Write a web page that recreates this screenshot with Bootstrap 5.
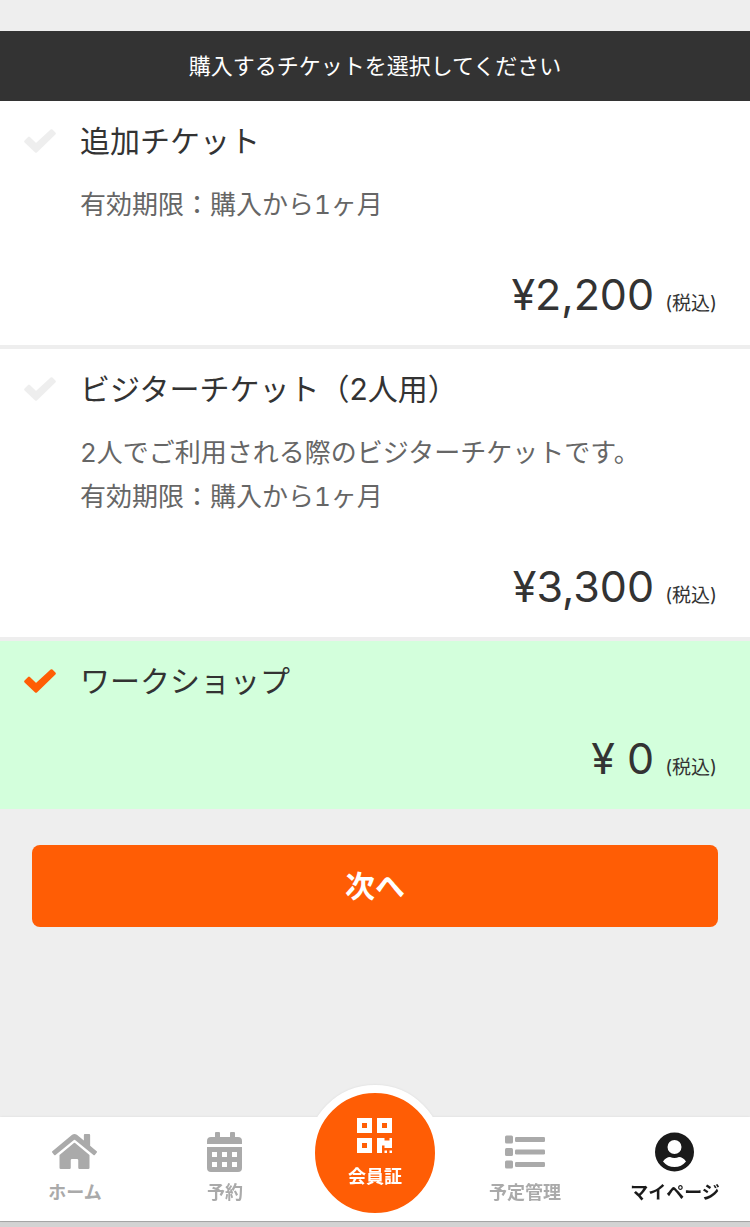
<!DOCTYPE html>
<html lang="ja">
<head>
<meta charset="utf-8">
<meta name="viewport" content="width=device-width, initial-scale=1">
<title>チケット購入</title>
<link href="https://cdn.jsdelivr.net/npm/bootstrap@5.3.0/dist/css/bootstrap.min.css" rel="stylesheet">
<style>
  body { font-family: Inter, "Noto Sans CJK JP", sans-serif; background: #eee; color: #333; }
  .page-title { margin-top: 31px; background: #333; font-size: 22px; line-height: 70px; font-weight: 400; }
  .ticket { padding: 16px 33px 18px 24px; gap: 24px; background: #fff; cursor: pointer; }
  .ticket:has(input:checked) { background: #d3ffdc; }
  .ticket + .ticket { margin-top: 4px; }
  .ticket-check {
    appearance: none; width: 32px; height: 24px; margin: 12px 0; background: #eee;
    -webkit-mask: url("data:image/svg+xml,%3Csvg xmlns='http://www.w3.org/2000/svg' viewBox='0 0 32 24'%3E%3Cpath d='M1.500 12.500 5 9 12 15.800 27.500 1.500 30.500 4.500 12 22.500z' stroke='%23000' stroke-width='2.600' stroke-linejoin='round'/%3E%3C/svg%3E") center / 100% 100% no-repeat;
  }
  .ticket-check:checked { background: #ff5d05; }
  .ticket-name { font-size: 30px; line-height: 48px; }
  .ticket-note { padding: 18px 0 14px; font-size: 26px; line-height: 44px; color: #666; font-variant-numeric: tabular-nums; }
  .ticket-price { padding-top: 20px; gap: 11px; font-size: 43px; line-height: 66px; }
  .ticket-tax { font-size: 19px; line-height: 24px; }
  .form-actions { padding: 36px 32px; }
  .btn-next { --bs-btn-bg: #ff5d05; --bs-btn-hover-bg: #e85200; --bs-btn-active-bg: #d64b00; --bs-btn-color: #fff; --bs-btn-hover-color: #fff; --bs-btn-active-color: #fff;
    padding: 16px; border: 0; border-radius: 8px; font-size: 30px; line-height: 50px; font-weight: 600; }
  .tab-bar { background: #fff; height: 104px; filter: drop-shadow(0 0 1px rgba(0,0,0,.08)); }
  .tab-item { flex: 1 1 0; padding-top: 12px; color: #aaa; font-size: 18px; line-height: 36px; font-weight: 600; text-decoration: none; white-space: nowrap; }
  .tab-item svg { height: 46px; }
  .tab-item.active { color: #1a1a1a; }
  .tab-center { flex: 1 1 0; }
  .tab-card { flex: none; width: 136px; height: 136px; margin-top: -32px; padding-top: 22px; border: 8px solid #fff; border-radius: 50%; background: #ff5d05; color: #fff; line-height: 32px; }
  .screen-edge { height: 6px; background: #d3d3d3; border-top: 1px solid #aaa; }
</style>
<script src="https://cdn.jsdelivr.net/npm/bootstrap@5.3.0/dist/js/bootstrap.bundle.min.js"></script>
</head>
<body class="d-flex flex-column min-vh-100">
<main>
  <h1 class="page-title mb-0 text-center text-white">購入するチケットを選択してください</h1>
  <form>
    <label class="ticket d-flex align-items-start">
      <input class="ticket-check flex-shrink-0" type="radio" name="ticket">
      <span class="flex-grow-1">
        <span class="ticket-name d-block">追加チケット</span>
        <span class="ticket-note d-block">有効期限：購入から1ヶ月</span>
        <span class="ticket-price d-flex justify-content-end align-items-baseline"><span>¥2,200</span><span class="ticket-tax">(税込)</span></span>
      </span>
    </label>
    <label class="ticket d-flex align-items-start">
      <input class="ticket-check flex-shrink-0" type="radio" name="ticket">
      <span class="flex-grow-1">
        <span class="ticket-name d-block">ビジターチケット（2人用）</span>
        <span class="ticket-note d-block">2人でご利用される際のビジターチケットです。<br>有効期限：購入から1ヶ月</span>
        <span class="ticket-price d-flex justify-content-end align-items-baseline"><span>¥3,300</span><span class="ticket-tax">(税込)</span></span>
      </span>
    </label>
    <label class="ticket d-flex align-items-start">
      <input class="ticket-check flex-shrink-0" type="radio" name="ticket" checked>
      <span class="flex-grow-1">
        <span class="ticket-name d-block">ワークショップ</span>
        <span class="ticket-price d-flex justify-content-end align-items-baseline"><span>¥ 0</span><span class="ticket-tax">(税込)</span></span>
      </span>
    </label>
    <div class="form-actions"><button type="button" class="btn btn-next w-100">次へ</button></div>
  </form>
</main>
<footer class="mt-auto">
  <nav class="tab-bar d-flex">
    <a class="tab-item d-flex flex-column align-items-center" href="#home">
      <svg width="46" viewBox="0 0 46 46" fill="currentColor" aria-hidden="true"><path transform="translate(0 2.5) scale(.078125)" d="M280.37 148.26L96 300.11V464a16 16 0 0 0 16 16l112.06-.29a16 16 0 0 0 15.92-16V368a16 16 0 0 1 16-16h64a16 16 0 0 1 16 16v95.64a16 16 0 0 0 16 16.05L464 480a16 16 0 0 0 16-16V300L295.67 148.26a12.19 12.19 0 0 0-15.3 0zM571.6 251.47L488 182.56V44.05a12 12 0 0 0-12-12h-56a12 12 0 0 0-12 12v72.61L318.47 43a48 48 0 0 0-61 0L4.34 251.47a12 12 0 0 0-1.6 16.9l25.5 31A12 12 0 0 0 45.15 301l235.22-193.74a12.19 12.19 0 0 1 15.3 0L530.9 301a12 12 0 0 0 16.9-1.6l25.5-31a12 12 0 0 0-1.7-16.93z"/></svg>
      <span>ホーム</span></a>
    <a class="tab-item d-flex flex-column align-items-center" href="#reserve">
      <svg width="36" viewBox="0 0 36 46" fill="currentColor" aria-hidden="true"><path d="M0 15V12q0-4 4-4H8V4q0-1 1-1h3q1 0 1 1v4h10V4q0-1 1-1h3q1 0 1 1v4h3q4 0 4 4v3z"/><path fill-rule="evenodd" d="M0 18h35v21q0 4-4 4H4q-4 0-4-4zM5 23v5h5v-5zm10 0v5h5v-5zm10 0v5h5v-5zM5 33v5h5v-5zm10 0v5h5v-5zm10 0v5h5v-5z"/></svg>
      <span>予約</span></a>
    <div class="tab-center d-flex justify-content-center">
      <a class="tab-item tab-card d-flex flex-column align-items-center" href="#card">
        <svg width="36" viewBox="0 0 36 46" fill="currentColor" aria-hidden="true"><path transform="translate(0 .5) scale(.078125)" d="M0 224h192V32H0v192zM64 96h64v64H64V96zm192-64v192h192V32H256zm128 128h-64V96h64v64zM0 480h192V288H0v192zm64-128h64v64H64v-64zm352-64h32v128h-96v-32h-32v96h-64V288h96v32h64v-32zm0 160h32v32h-32v-32zm-64 0h32v32h-32v-32z"/></svg>
        <span>会員証</span></a>
    </div>
    <a class="tab-item d-flex flex-column align-items-center" href="#schedule">
      <svg width="40" viewBox="0 0 40 46" fill="currentColor" aria-hidden="true"><rect y="6.500" width="8" height="8" rx="1.500"/><rect y="19" width="8" height="8" rx="1.500"/><rect y="31.500" width="8" height="8" rx="1.500"/><rect x="10" y="8" width="30" height="5" rx="1.200"/><rect x="10" y="20.500" width="30" height="5" rx="1.200"/><rect x="10" y="33" width="30" height="5" rx="1.200"/></svg>
      <span>予定管理</span></a>
    <a class="tab-item active d-flex flex-column align-items-center" href="#mypage" aria-current="page">
      <svg width="40" viewBox="0 0 40 46" fill="currentColor" aria-hidden="true"><path fill-rule="evenodd" d="M19.500 3.500a19.500 19.500 0 1 0 0 39 19.500 19.500 0 1 0 0-39zM19.500 11a7 7 0 1 1 0 14 7 7 0 1 1 0-14zM8 32.500Q11 28 15 28q2.300 1 4.500 1t4.500-1q4 0 7 4.500Q26.500 38 19.500 38T8 32.500z"/></svg>
      <span>マイページ</span></a>
  </nav>
  <div class="screen-edge"></div>
</footer>
</body>
</html>
